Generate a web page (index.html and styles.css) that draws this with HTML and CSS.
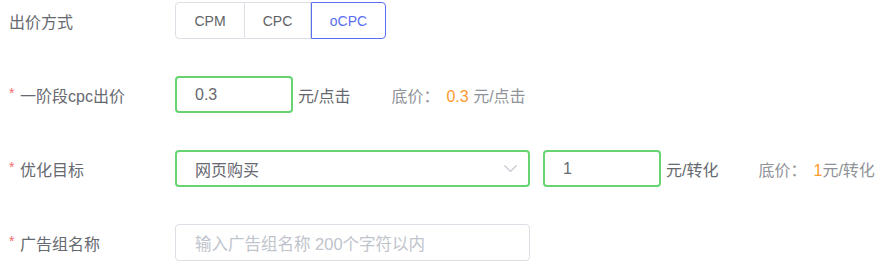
FILE: index.html
```html
<!DOCTYPE html>
<html lang="zh-CN">
<head>
<meta charset="utf-8">
<link rel="stylesheet" href="styles.css">
</head>
<body>
<form class="form">
  <div class="row">
    <label class="label">出价方式</label>
    <div class="seg">
      <button type="button" class="seg-item seg-cpm">CPM</button>
      <button type="button" class="seg-item seg-cpc">CPC</button>
      <button type="button" class="seg-item seg-ocpc active">oCPC</button>
    </div>
  </div>
  <div class="row">
    <label class="label"><span class="req">*</span>一阶段cpc出价</label>
    <div class="box box-small focus"><span class="val">0.3</span></div>
    <span class="unit">元/点击</span>
    <span class="floor"><span class="floor-key">底价：</span><span class="num">0.3</span> 元/点击</span>
  </div>
  <div class="row">
    <label class="label"><span class="req">*</span>优化目标</label>
    <div class="box box-wide focus select">
      <span class="val">网页购买</span>
      <svg class="chev" width="13" height="7" viewBox="0 0 13 7"><path d="M0.5 0.5 L6.5 6.5 L12.5 0.5" fill="none" stroke="#c0c4cc" stroke-width="1.1"/></svg>
    </div>
    <div class="box box-small focus second"><span class="val">1</span></div>
    <span class="unit">元/转化</span>
    <span class="floor floor2"><span class="floor-key">底价：</span><span class="num">1</span>元/转化</span>
  </div>
  <div class="row">
    <label class="label"><span class="req">*</span>广告组名称</label>
    <div class="box box-wide"><span class="ph">输入广告组名称 200个字符以内</span></div>
  </div>
</form>
</body>
</html>
```
FILE: styles.css
```css
* { box-sizing: border-box; }
body {
  margin: 0;
  background: #fff;
  font-family: "Liberation Sans", Arial, "Noto Sans CJK SC", sans-serif;
  color: #606266;
}
.form {
  padding: 2px 0 0 9px;
  display: flex;
  flex-direction: column;
  gap: 37px;
}
.row {
  display: flex;
  align-items: center;
  height: 37px;
}
.label {
  width: 166px;
  font-size: 16px;
  color: #66696f;
  display: flex;
  align-items: center;
}
.req {
  color: #f56c6c;
  font-size: 14px;
  width: 11px;
  margin-top: -4px;
}
.seg {
  display: flex;
  height: 37px;
}
.seg-item {
  font-family: "Liberation Sans", Arial, sans-serif;
  font-size: 14px;
  color: #606266;
  background: #fff;
  border: 1px solid #dcdfe6;
  border-left: none;
  height: 37px;
  padding: 0;
  cursor: pointer;
}
.seg-cpm {
  width: 70px;
  border-left: 1px solid #dcdfe6;
  border-radius: 4px 0 0 4px;
}
.seg-cpc { width: 66px; }
.seg-ocpc { width: 75px; border-radius: 0 4px 4px 0; }
.seg-item.active {
  color: #5a6ef0;
  border: 1px solid #5a6ef0;
}
.box {
  height: 37px;
  border: 1px solid #dcdfe6;
  border-radius: 4px;
  display: flex;
  align-items: center;
  padding: 0 19px;
  font-size: 16px;
  color: #66696f;
  background: #fff;
}
.box.focus {
  border: 2px solid #67d371;
  padding: 0 18px;
}
.box-small { width: 118px; }
.box-wide { width: 355px; }
.select { justify-content: space-between; padding-right: 12px; }
.box.focus.select { padding-right: 11px; }
.chev { display: block; }
.second { margin-left: 13px; }
.ph { color: #c0c4cc; font-size: 16.5px; }
.unit {
  font-size: 16px;
  color: #66696f;
  margin-left: 5px;
}
.floor {
  font-size: 16px;
  color: #909399;
  margin-left: 41px;
}
.floor-key { margin-right: 7px; }
.floor2 { margin-left: 40px; }
.num { color: #ff9a2e; }
```
